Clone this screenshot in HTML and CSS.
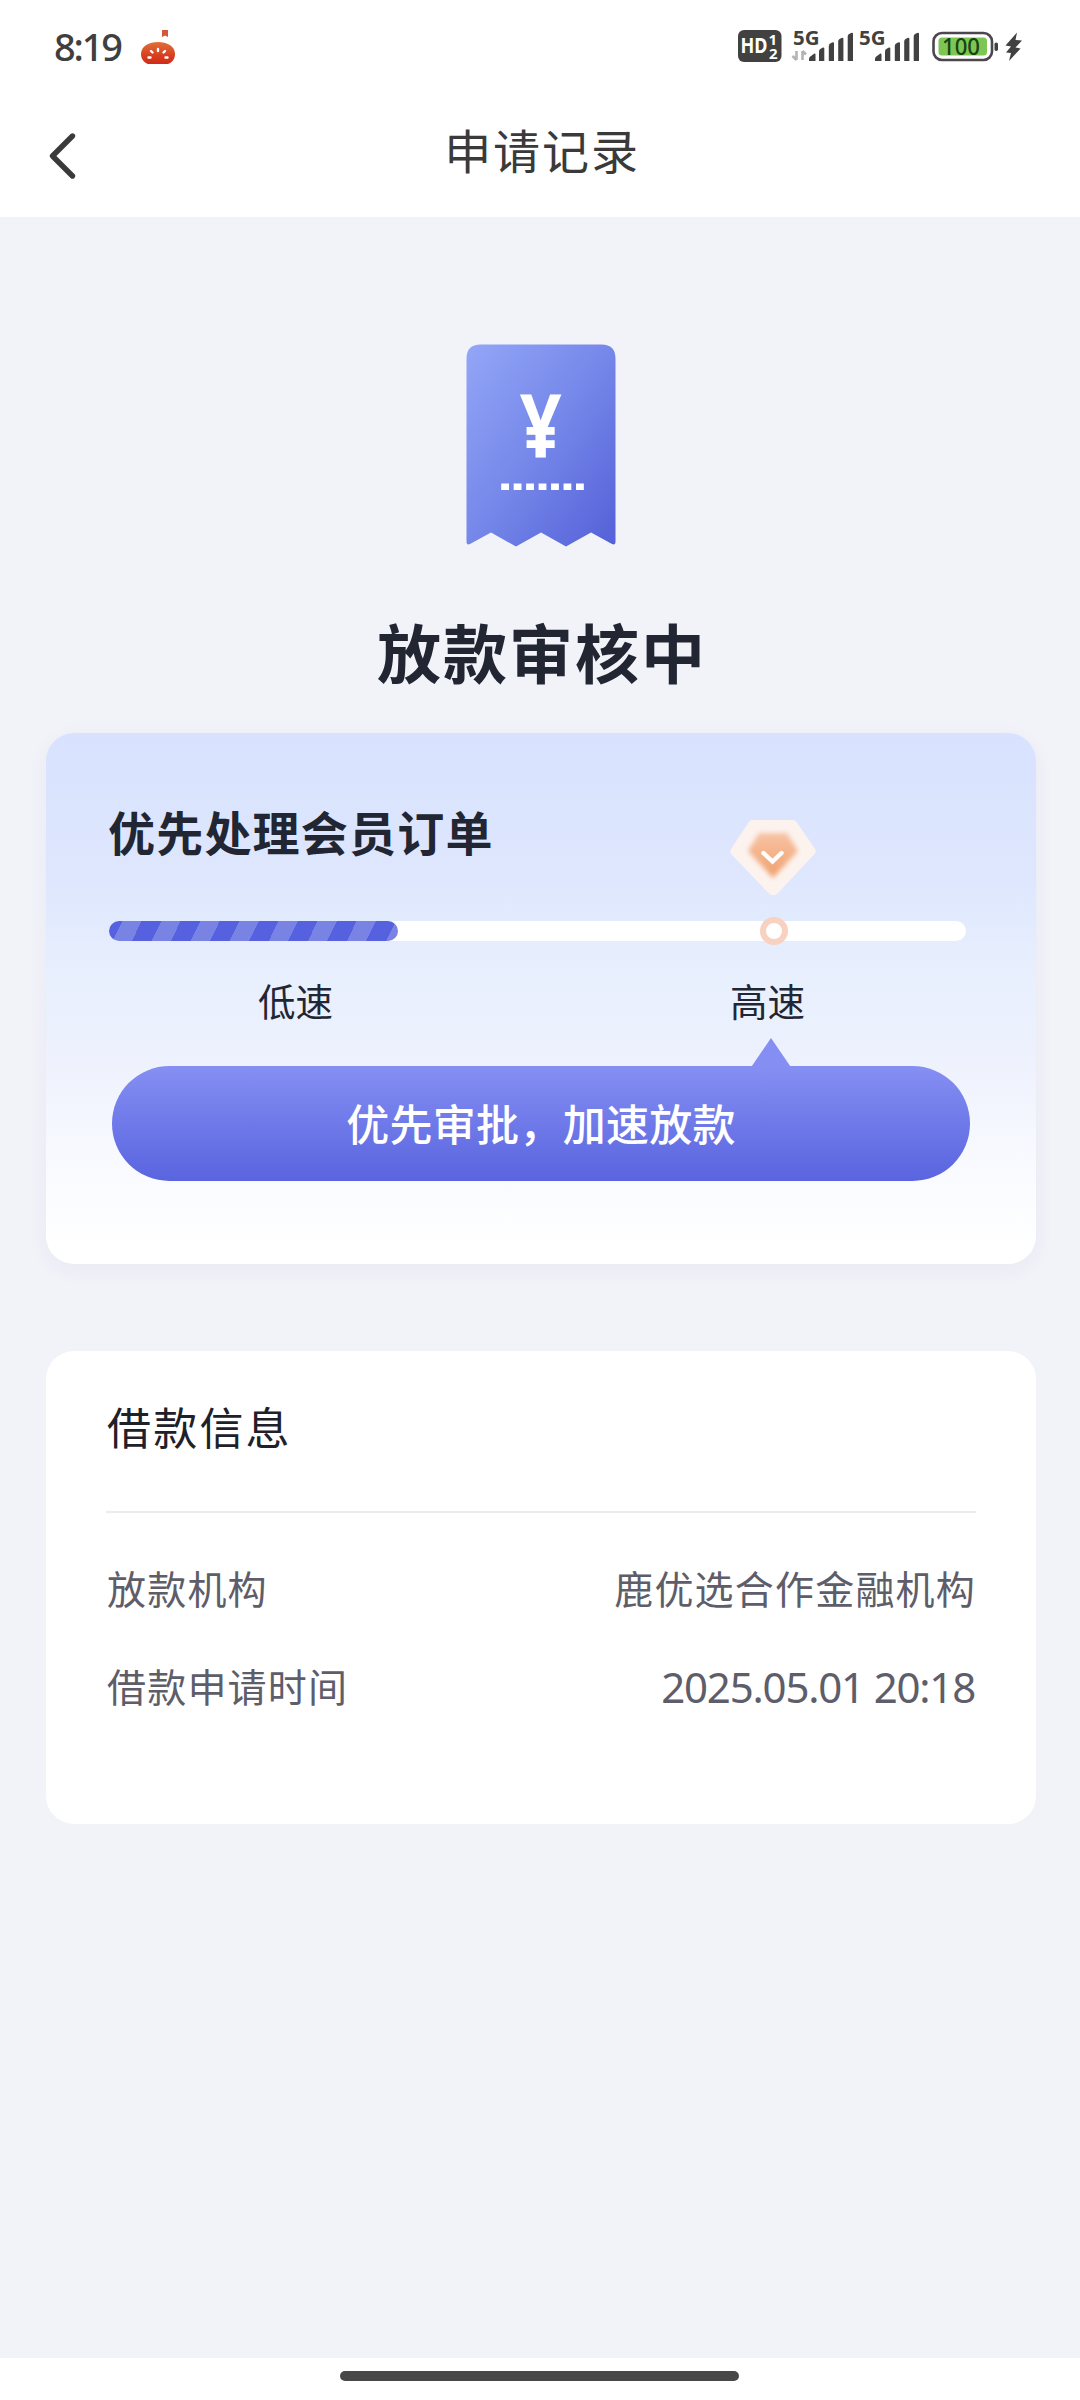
FILE: index.html
```html
<!DOCTYPE html>
<html lang="zh-CN">
<head>
<meta charset="utf-8">
<title>申请记录</title>
<link rel="stylesheet" href="styles.css">
</head>
<body>
<div class="statusbar">
  <div class="status-left">
    <span class="clock">8:19</span>
    <svg class="tomato" width="36" height="36" viewBox="0 0 36 36">
      <defs><linearGradient id="tg" x1="0" y1="0" x2="0" y2="1"><stop offset="0" stop-color="#e0703c"/><stop offset=".6" stop-color="#d9401f"/><stop offset="1" stop-color="#cf2c18"/></linearGradient></defs>
      <path d="M22 0h6v7l-3-1.400-3 1.400z" fill="#d2573b"/>
      <path d="M8 34C3 32 1 28 1 24C1 16 9 12 18 12S35 16 35 24C35 28 33 32 28 34z" fill="url(#tg)"/>
      <g stroke="#fff" stroke-width="2.400" stroke-linecap="round"><path d="M18 19v2M12.500 22.500l-1.500-1.500M23.500 22.500l1.500-1.500M10.500 27.500H8.500M25.500 27.500H27.500"/></g>
    </svg>
  </div>
  <svg class="status-icons" width="304" height="56" viewBox="728 16 304 56">
    <rect x="738" y="30" width="43.500" height="32" rx="6" fill="#414141"/>
    <g font-family="Noto Sans" font-weight="700" fill="#fff">
      <text x="740.500" y="53.300" font-size="21" textLength="27" lengthAdjust="spacingAndGlyphs">HD</text>
      <text x="768.500" y="45" font-size="15">1</text>
      <text x="769" y="59" font-size="15">2</text>
    </g>
    <g font-family="Noto Sans" font-weight="700" font-size="20" fill="#414141">
      <text x="793" y="45" textLength="26.500" lengthAdjust="spacingAndGlyphs">5G</text>
      <text x="859" y="45" textLength="26.500" lengthAdjust="spacingAndGlyphs">5G</text>
    </g>
    <path d="M796.500 51v9M792.500 56l4 4M802.500 60v-9M806 54.500l-3.500-3.500" stroke="#b4b4b4" stroke-width="2.600" fill="none"/>
    <g id="bars" fill="#414141">
      <path d="M809 59q0-1.500 1-2.200l4-3q1.500-1 1.500.8V61h-6.500z"/>
      <path d="M819 51.500q0-1.500 1-2.200l2.300-1.600q2-.8 2 .8V61h-5.300z"/>
      <path d="M828.800 46q0-1.500 1-2.200l2.200-1.300q2-.8 2 .8V61h-5.200z"/>
      <path d="M838.200 41.500q0-1.500 1-2.200l2.200-1.300q2-.8 2 .8V61h-5.200z"/>
      <path d="M847.700 36.500q0-1.500 1-2.200l2.300-1.300q2-.8 2 .8V61h-5.300z"/>
    </g>
    <use href="#bars" x="66"/>
    <rect x="933.500" y="33" width="58.500" height="27" rx="8.500" fill="#fff" stroke="#4b474c" stroke-width="2.600"/>
    <rect x="938.500" y="37.500" width="48.500" height="18" rx="3.500" fill="#7ec653"/>
    <text x="942" y="55" font-family="Noto Sans" font-size="23" font-weight="500" fill="#174314" textLength="38" lengthAdjust="spacingAndGlyphs">100</text>
    <rect x="994.500" y="42.500" width="3.500" height="8.500" rx="1.700" fill="#414141"/>
    <path d="M1017 32.500L1005.500 45.500L1011 46.500L1006 52.500L1011 53L1009 61L1020.500 48.500L1015.500 47.500L1022 40.500L1015.500 40z" fill="#414141"/>
  </svg>
</div>
<header class="navbar">
  <svg class="back" width="30" height="50" viewBox="0 0 30 50"><path d="M25.500 5L5.500 25L25.500 45" fill="none" stroke="#3a3a3a" stroke-width="5.400" stroke-linecap="round" stroke-linejoin="round"/></svg>
  <h1 class="nav-title">申请记录</h1>
</header>
<main class="content">
  <svg class="receipt" width="150" height="203" viewBox="466 343.500 150 203">
    <defs><linearGradient id="rg" x1="0" y1="0" x2="1" y2="1"><stop offset="0" stop-color="#93a6f7"/><stop offset=".5" stop-color="#7587e9"/><stop offset="1" stop-color="#5460d8"/></linearGradient></defs>
    <path d="M466.500 358Q466.500 344 480.500 344H601.500Q615.500 344 615.500 358V541Q615.500 545 612 543.500L591 532L566 546L541 532L516 546L491 532L470 543.500Q466.500 545 466.500 541z" fill="url(#rg)"/>
    <text x="519.700" y="457" font-family="Noto Sans" font-weight="700" font-size="88" fill="#fff" textLength="42" lengthAdjust="spacingAndGlyphs">¥</text>
    <path d="M501.200 486.200H584" stroke="#fff" stroke-width="6.500" stroke-dasharray="7.800 4.670"/>
  </svg>
  <h2 class="state">放款审核中</h2>

  <section class="card speed-card">
    <h3 class="speed-title">优先处理会员订单</h3>
    <div class="track">
      <div class="track-fill"></div>
      <svg class="gem" width="88" height="78" viewBox="0 0 88 78">
        <defs>
          <filter id="soft" x="-20%" y="-20%" width="140%" height="140%"><feGaussianBlur stdDeviation="2.600"/></filter>
          <linearGradient id="gg" x1="0" y1="0" x2="0" y2="1"><stop offset="0" stop-color="#f7c3a4"/><stop offset="1" stop-color="#f0a06b"/></linearGradient>
        </defs>
        <path d="M23 1H64Q66 1 67.500 3L86 30Q87.500 32.500 85.500 35L49 74Q44 78.500 39.500 74L2.500 35.500Q.5 32.500 2 30L20 3Q21.500 1 23 1z" fill="#fcf3ef"/>
        <path d="M30 14H58L69 32L44 59L19 32z" fill="url(#gg)" filter="url(#soft)"/>
        <path d="M34.500 34L43.500 42.500L52.500 34" fill="none" stroke="#fff" stroke-width="4.400" stroke-linecap="round"/>
      </svg>
      <div class="knob"></div>
    </div>
    <div class="speed-labels"><span>低速</span><span>高速</span></div>
    <div class="cta">优先审批，加速放款<svg class="caret" width="42" height="30" viewBox="0 0 42 30"><path d="M21 0L41.500 30H.5z" fill="#858ff3"/></svg></div>
  </section>

  <section class="card info-card">
    <h3 class="info-title">借款信息</h3>
    <dl class="info-list">
      <div class="info-row"><dt>放款机构</dt><dd>鹿优选合作金融机构</dd></div>
      <div class="info-row"><dt>借款申请时间</dt><dd class="date">2025.05.01 20:18</dd></div>
    </dl>
  </section>
</main>
<footer class="gesture"><div class="gesture-bar"></div></footer>
</body>
</html>
```
FILE: styles.css
```css
* { box-sizing: border-box; }
body, h1, h2, h3, dl, dt, dd { margin: 0; font-weight: 400; }
body {
  width: 1080px;
  height: 2400px;
  display: flex;
  flex-direction: column;
  overflow: hidden;
  background: #f2f3f9;
  font-family: "Noto Sans CJK SC", sans-serif;
  color: #222633;
}
.statusbar {
  height: 94px;
  flex: none;
  padding: 0 48px 0 54px;
  background: #fff;
  display: flex;
  justify-content: space-between;
}
.status-left { display: flex; }
.clock {
  width: 86px;
  font: 500 38px/92px "Noto Sans", sans-serif;
  letter-spacing: -2.200px;
  color: #3f3f3f;
  white-space: nowrap;
}
.tomato { margin-top: 30px; }
.status-icons { margin-top: 16px; }
.navbar {
  height: 123px;
  flex: none;
  background: #fff;
  display: grid;
  grid-template-columns: 120px 1fr 120px;
}
.back { margin: 37px 0 0 47px; }
.nav-title {
  padding-left: 4px;
  font-size: 47px;
  line-height: 110px;
  letter-spacing: 1.900px;
  text-align: center;
  color: #3a3a3a;
}
.content {
  flex: 1;
  padding: 126.500px 44px 0 46px;
  display: flex;
  flex-direction: column;
}
.receipt { align-self: center; flex: none; }
.state {
  height: 80px;
  margin: 63px 0 43.500px;
  padding-left: 2px;
  line-height: 80px;
  font-size: 64px;
  letter-spacing: 2px;
  font-weight: 700;
  text-align: center;
}
.card { border-radius: 28px; flex: none; }
.speed-card {
  height: 531px;
  padding: 68px 66px 0 63px;
  background: linear-gradient(#d8e2fe 0%, #dee7fd 28%, #e7effe 44%, #edf1fd 60%, #f7f9ff 78%, #fff 97%);
  box-shadow: 0 6px 20px rgba(60, 60, 110, .05);
}
.speed-title {
  margin-left: -1px;
  line-height: 60px;
  font-size: 47px;
  letter-spacing: 1.200px;
  font-weight: 700;
}
.track {
  position: relative;
  width: 857px;
  height: 20px;
  margin-top: 60px;
  border-radius: 10px;
  background: #fff;
}
.track-fill {
  width: 289px;
  height: 20px;
  border-radius: 10px;
  background: repeating-linear-gradient(116deg, #5661df 0 12px, #7883e4 12px 29.300px, #5661df 29.300px 35.100px);
}
.gem { position: absolute; left: 620px; top: -102px; }
.knob {
  position: absolute;
  left: 651px;
  top: -4px;
  width: 28px;
  height: 28px;
  border-radius: 50%;
  border: 6px solid #f8d1c1;
  background: #fff;
}
.speed-labels {
  padding: 0 170px 0 149px;
  margin-top: 34px;
  line-height: 50px;
  font-size: 37.500px;
  display: flex;
  justify-content: space-between;
}
.speed-labels span:last-child { margin-right: -5px; }
.cta {
  position: relative;
  width: 858px;
  height: 115px;
  margin: 41px 0 0 3px;
  border-radius: 58px;
  background: linear-gradient(#858ff3, #5964df);
  color: #fff;
  font-size: 43px;
  font-weight: 500;
  letter-spacing: .3px;
  line-height: 113px;
  text-align: center;
}
.caret { position: absolute; left: 638px; top: -28.500px; }
.info-card {
  height: 473px;
  margin-top: 87px;
  padding: 46px 60px 0;
  background: #fff;
}
.info-title {
  height: 116px;
  padding-left: 1px;
  border-bottom: 2px solid #ececee;
  line-height: 59px;
  font-size: 44px;
  letter-spacing: 2.200px;
  color: #1e212a;
}
.info-list { padding-top: 45px; }
.info-row {
  height: 60px;
  margin-bottom: 38px;
  display: flex;
  justify-content: space-between;
  line-height: 58px;
  font-size: 39px;
  letter-spacing: 1.200px;
  color: #5e5d6a;
}
.info-row dt { padding-left: 1px; }
.info-row .date {
  font: 400 42px/62px "Noto Sans", sans-serif;
  letter-spacing: -1.200px;
  padding-right: 1px;
}
.gesture {
  height: 42px;
  flex: none;
  background: #fff;
  padding-top: 13px;
}
.gesture-bar {
  width: 399px;
  height: 10px;
  margin-left: 340px;
  border-radius: 5px;
  background: #484848;
}
```
